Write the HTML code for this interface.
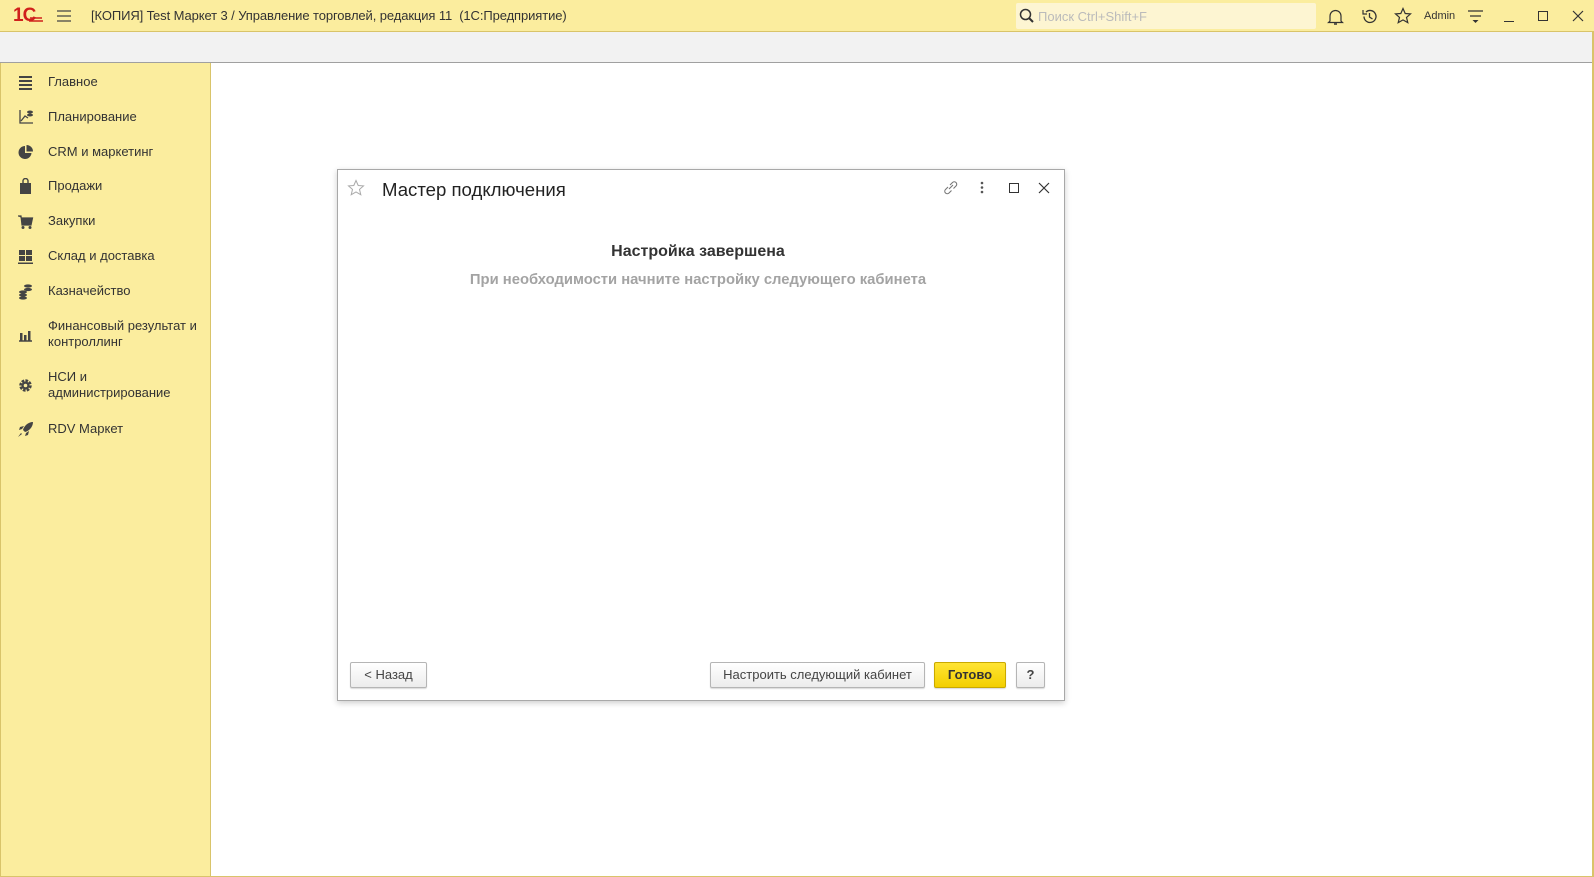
<!DOCTYPE html>
<html><head><meta charset="utf-8"><style>
*{margin:0;padding:0;box-sizing:border-box}
body{width:1594px;height:877px;background:#fff;font-family:"Liberation Sans",Arial,sans-serif;position:relative;overflow:hidden;color:#333}
.abs{position:absolute}
#top{left:0;top:0;width:1594px;height:32px;background:#fbed9e;border-bottom:1px solid #d9c46a}
#gray{left:0;top:32px;width:1594px;height:31px;background:#f2f2f2;border-bottom:1px solid #a0a0a0}
#side{left:0;top:63px;width:211px;height:814px;background:#fbed9e;border-right:1px solid #d9c46a;border-left:1px solid #d9c46a;border-bottom:1px solid #d9c46a}
#rb{left:1592px;top:32px;width:2px;height:845px;background:#d9c46a}
#bb{left:211px;top:876px;width:1383px;height:1px;background:#d9c46a}
.it{position:absolute;left:47px;font-size:13px;color:#333;line-height:16px}
.ic{position:absolute;left:16px;width:17px;height:17px}
#dlg{left:337px;top:169px;width:728px;height:532px;border:1px solid #a8a8a8;background:#fff;box-shadow:0 2px 6px rgba(0,0,0,.2)}
.btn{position:absolute;top:492px;height:26px;border:1px solid #b5b5b5;border-radius:2px;background:linear-gradient(#fff,#ececec);font-size:13px;color:#444;text-align:center;line-height:24px;box-shadow:0 1px 1px rgba(0,0,0,.15)}
</style></head><body>
<div id="top" class="abs">
 <div class="abs" style="left:13px;top:5px;font:bold 19px 'Liberation Sans';color:#d0211c;letter-spacing:-1px">1<span style="font-size:19px">С</span></div>
 <svg class="abs" style="left:28px;top:9px" width="16" height="14"><path d="M1 12H15M2 9H14" stroke="#d0211c" stroke-width="1.6"/></svg>
 <svg class="abs" style="left:56px;top:9px" width="16" height="14"><path d="M1 2H15M1 7H15M1 12H15" stroke="#444" stroke-width="1.3"/></svg>
 <div class="abs" style="left:91px;top:8px;font-size:13px;color:#333;letter-spacing:-0.1px">[КОПИЯ] Test Маркет 3 / Управление торговлей, редакция 11 &nbsp;(1С:Предприятие)</div>
 <div class="abs" style="left:1016px;top:3px;width:300px;height:26px;background:#fdf5d2;border-radius:2px"></div>
 <svg class="abs" style="left:1019px;top:8px" width="16" height="16"><circle cx="6.5" cy="6.5" r="5" fill="none" stroke="#333" stroke-width="1.5"/><path d="M10 10L14 14" stroke="#333" stroke-width="2"/></svg>
 <div class="abs" style="left:1038px;top:9px;font-size:13px;color:#bbb">Поиск Ctrl+Shift+F</div>
 <svg class="abs" style="left:1327px;top:8px" width="17" height="18"><path d="M3 13V8a5.5 5.5 0 0 1 11 0v5l1.5 1.5H1.5Z" fill="none" stroke="#333" stroke-width="1.2"/><path d="M7 16h3" stroke="#333" stroke-width="1.5"/></svg>
 <svg class="abs" style="left:1361px;top:8px" width="17" height="17"><path d="M3 8.5a6 6 0 1 0 2-4.5" fill="none" stroke="#333" stroke-width="1.3"/><path d="M2 2v4h4" fill="none" stroke="#333" stroke-width="1.2"/><path d="M8.5 5v4l3 2" fill="none" stroke="#333" stroke-width="1.3"/></svg>
 <svg class="abs" style="left:1394px;top:7px" width="18" height="18"><path d="M9 1.5l2.2 5 5.3.4-4 3.5 1.3 5.3L9 12.9l-4.8 2.8 1.3-5.3-4-3.5 5.3-.4z" fill="none" stroke="#333" stroke-width="1.2"/></svg>
 <div class="abs" style="left:1424px;top:10px;font-size:11px;color:#333">Admin</div>
 <svg class="abs" style="left:1467px;top:9px" width="17" height="16"><path d="M1 2H16M3 7H14" stroke="#333" stroke-width="1.3"/><path d="M5.5 11h6l-3 3z" fill="#333"/></svg>
 <div class="abs" style="left:1504px;top:21px;width:10px;height:1px;background:#333"></div>
 <div class="abs" style="left:1538px;top:11px;width:10px;height:10px;border:1.3px solid #333"></div>
 <svg class="abs" style="left:1572px;top:10px" width="12" height="12"><path d="M1 1L11 11M11 1L1 11" stroke="#333" stroke-width="1.2"/></svg>
</div>
<div id="gray" class="abs"></div>
<div id="side" class="abs">
 <svg class="ic" style="top:11px" viewBox="0 0 17 17"><path d="M2 3H15M2 7H15M2 11H15M2 15H15" stroke="#444" stroke-width="2"/></svg><div class="it" style="top:11px">Главное</div>
 <svg class="ic" style="top:46px" viewBox="0 0 17 17"><path d="M3 1v13h13" fill="none" stroke="#444" stroke-width="1.3"/><path d="M4 12l4-5 3 2" fill="none" stroke="#444" stroke-width="1.3"/><ellipse cx="13" cy="3" rx="3" ry="1.5" fill="#444"/><ellipse cx="13" cy="6" rx="3" ry="1.5" fill="#444"/></svg><div class="it" style="top:46px">Планирование</div>
 <svg class="ic" style="top:81px" viewBox="0 0 17 17"><path d="M8 2a6.5 6.5 0 1 0 6.5 7H8z" fill="#444"/><path d="M9.5 1v6.5H16A6.5 6.5 0 0 0 9.5 1z" fill="#444"/></svg><div class="it" style="top:81px">CRM и маркетинг</div>
 <svg class="ic" style="top:115px" viewBox="0 0 17 17"><rect x="3" y="5" width="11" height="11" fill="#444"/><path d="M6 6V3a2.5 2.5 0 0 1 5 0v3" fill="none" stroke="#444" stroke-width="1.4"/></svg><div class="it" style="top:115px">Продажи</div>
 <svg class="ic" style="top:150px" viewBox="0 0 17 17"><path d="M1 3h3l1 9h9l1.5-7H4.5" fill="#444" stroke="#444" stroke-width="1.2"/><circle cx="6" cy="14.5" r="1.5" fill="#444"/><circle cx="13" cy="14.5" r="1.5" fill="#444"/></svg><div class="it" style="top:150px">Закупки</div>
 <svg class="ic" style="top:185px" viewBox="0 0 17 17"><rect x="2" y="2" width="6" height="5" fill="#444"/><rect x="9" y="2" width="6" height="5" fill="#444"/><rect x="2" y="8" width="6" height="5" fill="#444"/><rect x="9" y="8" width="6" height="5" fill="#444"/><rect x="1" y="14.5" width="15" height="1.5" fill="#444"/></svg><div class="it" style="top:185px">Склад и доставка</div>
 <svg class="ic" style="top:220px" viewBox="0 0 17 17"><ellipse cx="11" cy="3" rx="4" ry="1.6" fill="#444"/><ellipse cx="11" cy="6.5" rx="4" ry="1.6" fill="#444"/><ellipse cx="6" cy="9" rx="4" ry="1.6" fill="#444"/><ellipse cx="6" cy="12" rx="4" ry="1.6" fill="#444"/><ellipse cx="6" cy="15" rx="4" ry="1.6" fill="#444"/></svg><div class="it" style="top:220px">Казначейство</div>
 <svg class="ic" style="top:263px" viewBox="0 0 17 17"><path d="M2 15H15" stroke="#444" stroke-width="1.5"/><rect x="3" y="7" width="2.5" height="8" fill="#444"/><rect x="7" y="9" width="2.5" height="6" fill="#444"/><rect x="11" y="5" width="2.5" height="10" fill="#444"/></svg><div class="it" style="top:255px">Финансовый результат и<br>контроллинг</div>
 <svg class="ic" style="top:314px" viewBox="0 0 17 17"><circle cx="8.5" cy="8.5" r="4.5" fill="none" stroke="#444" stroke-width="3.5" stroke-dasharray="2.4 1.1"/><circle cx="8.5" cy="8.5" r="4" fill="#444"/><circle cx="8.5" cy="8.5" r="1.8" fill="#fbed9e"/></svg><div class="it" style="top:306px">НСИ и<br>администрирование</div>
 <svg class="ic" style="top:358px" viewBox="0 0 17 17"><path d="M16 1c-5 0-9 4-10 8l2 2c4-1 8-5 8-10z" fill="#444"/><path d="M5 8l-3 1 1-3 4-1zM9 12l-1 3 3-1 1-4z" fill="#444"/><path d="M4 12l-3 4 4-3z" fill="#444"/></svg><div class="it" style="top:358px">RDV Маркет</div>
</div>
<div id="rb" class="abs"></div>
<div id="bb" class="abs"></div>
<div id="dlg" class="abs">
 <svg class="abs" style="left:9px;top:9px" width="18" height="18"><path d="M9 1.5l2.2 5 5.3.4-4 3.5 1.3 5.3L9 12.9l-4.8 2.8 1.3-5.3-4-3.5 5.3-.4z" fill="none" stroke="#aaa" stroke-width="1"/></svg>
 <div class="abs" style="left:44px;top:9px;font-size:18.6px;color:#222">Мастер подключения</div>
 <svg class="abs" style="left:604px;top:9px" width="17" height="17"><path d="M7 10l4-4M6 8l-2.5 2.5a2.4 2.4 0 0 0 3.5 3.5L9.5 11.5M8 6l2.5-2.5a2.4 2.4 0 0 1 3.5 3.5L11.5 9.5" fill="none" stroke="#777" stroke-width="1.1"/></svg>
 <svg class="abs" style="left:642px;top:11px" width="4" height="13"><circle cx="2" cy="2" r="1.3" fill="#555"/><circle cx="2" cy="6.5" r="1.3" fill="#555"/><circle cx="2" cy="11" r="1.3" fill="#555"/></svg>
 <div class="abs" style="left:671px;top:13px;width:10px;height:10px;border:1.3px solid #333"></div>
 <svg class="abs" style="left:700px;top:12px" width="12" height="12"><path d="M1 1L11 11M11 1L1 11" stroke="#333" stroke-width="1.2"/></svg>
 <div class="abs" style="left:0;width:720px;top:73px;text-align:center;font-size:16px;font-weight:bold;color:#333">Настройка завершена</div>
 <div class="abs" style="left:0;width:720px;top:102px;text-align:center;font-size:14.8px;font-weight:bold;color:#a3a3a3">При необходимости начните настройку следующего кабинета</div>
 <div class="btn" style="left:12px;width:77px">&lt; Назад</div>
 <div class="btn" style="left:372px;width:215px">Настроить следующий кабинет</div>
 <div class="btn" style="left:596px;width:72px;background:linear-gradient(#ffe433,#f3cf00);border-color:#c9a900;font-weight:bold;color:#333">Готово</div>
 <div class="btn" style="left:678px;width:29px;font-weight:bold">?</div>
</div>
</body></html>
